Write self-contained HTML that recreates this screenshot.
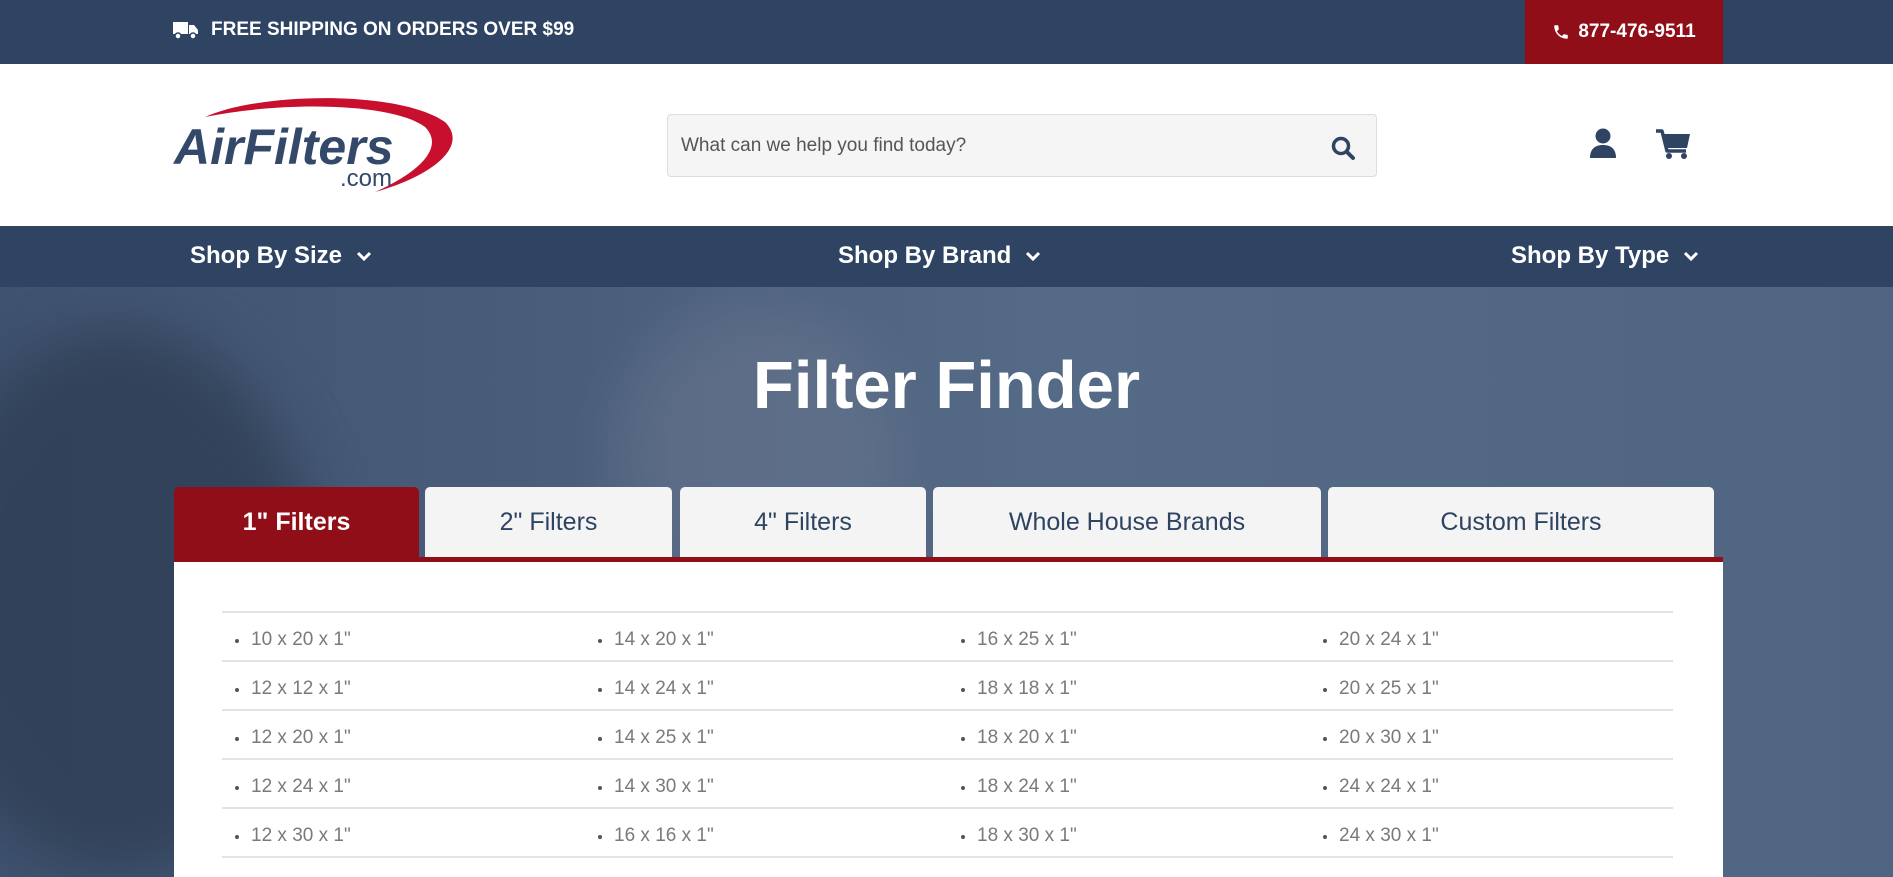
<!DOCTYPE html>
<html><head><meta charset="utf-8"><style>
*{margin:0;padding:0;box-sizing:border-box}
html,body{width:1893px;height:877px;overflow:hidden}
body{font-family:"Liberation Sans",sans-serif;background:#fff;position:relative}
.top{position:absolute;left:0;top:0;width:1893px;height:64px;background:#2e4462}
.ship{position:absolute;left:173px;top:19px;color:#fff;font-weight:bold;font-size:19px;display:flex;align-items:center;gap:12px}
.phone{position:absolute;left:1525px;top:0;width:198px;height:64px;background:#8f0e17;color:#fff;font-weight:bold;font-size:19px;display:flex;align-items:center;justify-content:center;gap:8px}
.logo{position:absolute;left:170px;top:92px}
.search{position:absolute;left:667px;top:114px;width:710px;height:63px;background:#f5f5f5;border:1px solid #ddd;border-radius:4px}
.search span{position:absolute;left:13px;top:20px;font-size:19px;color:#555}
.search svg{position:absolute;right:20px;top:20px}
.nav{position:absolute;left:0;top:226px;width:1893px;height:61px;background:#2e4462}
.nav div{position:absolute;top:16px;color:#fff;font-weight:bold;font-size:24px;display:flex;align-items:center;gap:14px}
.hero{position:absolute;left:0;top:287px;width:1893px;height:590px;background:linear-gradient(90deg,#3f5370 0%,#4a5e7b 30%,#556a86 55%,#506582 100%);overflow:hidden}
.blob{position:absolute;border-radius:50%;filter:blur(30px)}
h1{position:absolute;left:0;width:1893px;top:348px;text-align:center;color:#fff;font-size:67px;font-weight:bold;line-height:76px}
.tab{position:absolute;top:487px;height:70px;background:#f4f4f4;border-radius:5px 5px 0 0;color:#2e4462;font-size:25px;display:flex;align-items:center;justify-content:center}
.tab.a{background:#8f0e17;color:#fff;font-weight:bold}
.redline{position:absolute;left:174px;top:557px;width:1549px;height:5px;background:#8f0e17}
.panel{position:absolute;left:174px;top:562px;width:1549px;height:315px;background:#fff}
.hl{position:absolute;left:222px;width:1451px;height:2px;background:#e3e3e3}
.it{position:absolute;font-size:19px;color:#7a7a7a;line-height:22px}
.it:before{content:"";position:absolute;left:-16px;top:10px;width:4px;height:4px;border-radius:50%;background:#555}
</style></head><body>
<div class="top">
 <div class="ship"><svg width="26" height="20" viewBox="0 0 26 20"><path d="M0 2h15v12H0z M16 5h5l4 5v4h-9z" fill="#fff"/><circle cx="5" cy="16" r="3" fill="#fff" stroke="#2e4462" stroke-width="1.5"/><circle cx="20" cy="16" r="3" fill="#fff" stroke="#2e4462" stroke-width="1.5"/></svg>FREE SHIPPING ON ORDERS OVER $99</div>
 <div class="phone"><svg width="18" height="18" viewBox="0 0 24 24"><path d="M6.6 10.8c1.4 2.8 3.8 5.1 6.6 6.6l2.2-2.2c.3-.3.7-.4 1-.2 1.1.4 2.3.6 3.6.6.6 0 1 .4 1 1V20c0 .6-.4 1-1 1C10.6 21 3 13.4 3 4c0-.6.4-1 1-1h3.5c.6 0 1 .4 1 1 0 1.3.2 2.5.6 3.6.1.3 0 .7-.2 1z" fill="#fff"/></svg>877-476-9511</div>
</div>
<svg class="logo" width="290" height="105" viewBox="0 0 290 105">
 <path d="M35 25 C90 0 230 -2 275 30 C300 55 260 85 205 100 C250 80 275 55 255 35 C225 12 120 8 35 25z" fill="#c8102e"/>
 <text x="4" y="72" font-family="Liberation Sans" font-weight="bold" font-style="italic" font-size="50" fill="#34496a">AirFilters</text>
 <text x="170" y="94" font-family="Liberation Sans" font-size="24" fill="#34496a">.com</text>
</svg>
<div class="search"><span>What can we help you find today?</span>
 <svg width="26" height="26" viewBox="0 0 26 26"><circle cx="11" cy="11" r="7.5" fill="none" stroke="#2e4462" stroke-width="3.5"/><path d="M16.5 16.5L23 23" stroke="#2e4462" stroke-width="4" stroke-linecap="round"/></svg></div>
<svg style="position:absolute;left:1589px;top:128px" width="28" height="32" viewBox="0 0 28 32"><circle cx="14" cy="8" r="7.5" fill="#2e4462"/><path d="M1 30c0-8 4-13 13-13s13 5 13 13z" fill="#2e4462"/></svg>
<svg style="position:absolute;left:1656px;top:129px" width="36" height="32" viewBox="0 0 36 32"><path d="M0 2h6l5 20h19" fill="none" stroke="#2e4462" stroke-width="3.5" stroke-linejoin="round"/><path d="M7 5h27l-3 14H10z" fill="#2e4462"/><circle cx="13" cy="27" r="3" fill="#2e4462"/><circle cx="28" cy="27" r="3" fill="#2e4462"/></svg>
<div class="nav">
 <div style="left:190px">Shop By Size <svg width="16" height="12" viewBox="0 0 16 12"><path d="M2 3l6 6 6-6" fill="none" stroke="#fff" stroke-width="3"/></svg></div>
 <div style="left:838px">Shop By Brand <svg width="16" height="12" viewBox="0 0 16 12"><path d="M2 3l6 6 6-6" fill="none" stroke="#fff" stroke-width="3"/></svg></div>
 <div style="left:1511px">Shop By Type <svg width="16" height="12" viewBox="0 0 16 12"><path d="M2 3l6 6 6-6" fill="none" stroke="#fff" stroke-width="3"/></svg></div>
</div>
<div class="hero">
 <div class="blob" style="left:-80px;top:40px;width:400px;height:550px;background:#2c3a50;opacity:.7"></div>
 <div class="blob" style="left:620px;top:20px;width:280px;height:300px;background:#6c7890;opacity:.5"></div>
</div>
<h1>Filter Finder</h1>
<div class="tab a" style="left:174px;width:245px">1" Filters</div>
<div class="tab" style="left:425px;width:247px">2" Filters</div>
<div class="tab" style="left:680px;width:246px">4" Filters</div>
<div class="tab" style="left:933px;width:388px">Whole House Brands</div>
<div class="tab" style="left:1328px;width:386px">Custom Filters</div>
<div class="redline"></div>
<div class="panel"></div>
<div class="hl" style="top:611px"></div><div class="hl" style="top:660px"></div><div class="hl" style="top:709px"></div><div class="hl" style="top:758px"></div><div class="hl" style="top:807px"></div><div class="hl" style="top:856px"></div>
<div class="it" style="left:251px;top:629px">10 x 20 x 1"</div><div class="it" style="left:614px;top:629px">14 x 20 x 1"</div><div class="it" style="left:977px;top:629px">16 x 25 x 1"</div><div class="it" style="left:1339px;top:629px">20 x 24 x 1"</div>
<div class="it" style="left:251px;top:678px">12 x 12 x 1"</div><div class="it" style="left:614px;top:678px">14 x 24 x 1"</div><div class="it" style="left:977px;top:678px">18 x 18 x 1"</div><div class="it" style="left:1339px;top:678px">20 x 25 x 1"</div>
<div class="it" style="left:251px;top:727px">12 x 20 x 1"</div><div class="it" style="left:614px;top:727px">14 x 25 x 1"</div><div class="it" style="left:977px;top:727px">18 x 20 x 1"</div><div class="it" style="left:1339px;top:727px">20 x 30 x 1"</div>
<div class="it" style="left:251px;top:776px">12 x 24 x 1"</div><div class="it" style="left:614px;top:776px">14 x 30 x 1"</div><div class="it" style="left:977px;top:776px">18 x 24 x 1"</div><div class="it" style="left:1339px;top:776px">24 x 24 x 1"</div>
<div class="it" style="left:251px;top:825px">12 x 30 x 1"</div><div class="it" style="left:614px;top:825px">16 x 16 x 1"</div><div class="it" style="left:977px;top:825px">18 x 30 x 1"</div><div class="it" style="left:1339px;top:825px">24 x 30 x 1"</div>
</body></html>
